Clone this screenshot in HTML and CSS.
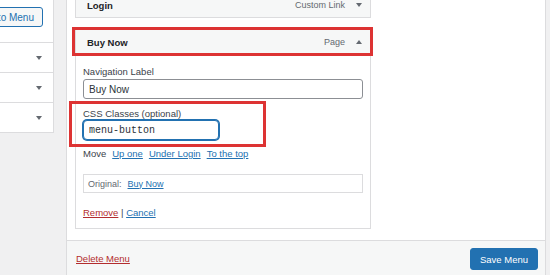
FILE: index.html
```html
<!DOCTYPE html>
<html lang="en">
<head>
<meta charset="utf-8">
<title>Menus</title>
<link rel="stylesheet" href="styles.css">
</head>
<body>
<div class="screen">
  <aside class="side">
    <div class="side-top"><button class="btn-add" type="button">Add to Menu</button></div>
    <div class="side-row"><span class="caret caret-down"></span></div>
    <div class="side-row"><span class="caret caret-down"></span></div>
    <div class="side-row"><span class="caret caret-down"></span></div>
  </aside>
  <main class="panel">
    <div class="panel-body">
      <ul class="items">
        <li class="item">
          <div class="item-head">
            <span class="item-title">Login</span>
            <span class="item-type">Custom Link</span>
            <span class="caret caret-down"></span>
          </div>
        </li>
        <li class="item item-open">
          <div class="item-head">
            <span class="item-title">Buy Now</span>
            <span class="item-type">Page</span>
            <span class="caret caret-up"></span>
            <span class="mark mark-head"></span>
          </div>
          <div class="item-settings">
            <label class="field">
              <span class="field-label">Navigation Label</span>
              <input class="input input-wide" type="text" value="Buy Now">
            </label>
            <label class="field field-css">
              <span class="field-label">CSS Classes (optional)</span>
              <input class="input input-css" type="text" value="menu-button">
              <span class="mark mark-css"></span>
            </label>
            <div class="move-row">
              <span class="move-label">Move</span>
              <a class="link" href="#">Up one</a>
              <a class="link" href="#">Under Login</a>
              <a class="link" href="#">To the top</a>
            </div>
            <div class="original">
              <span class="original-label">Original:</span>
              <a class="link" href="#">Buy Now</a>
            </div>
            <div class="actions">
              <a class="link link-delete" href="#">Remove</a> <span class="sep">|</span> <a class="link" href="#">Cancel</a>
            </div>
          </div>
        </li>
      </ul>
    </div>
    <footer class="panel-foot">
      <a class="link link-delete" href="#">Delete Menu</a>
      <button class="btn-save" type="button">Save Menu</button>
    </footer>
  </main>
</div>
</body>
</html>
```

FILE: styles.css
```css
* { box-sizing: border-box; }

html, body {
  margin: 0;
  padding: 0;
  background: #f0f0f1;
  font-family: "Liberation Sans", Arial, sans-serif;
  font-size: 9.5px;
  color: #3c434a;
}

.screen {
  display: flex;
  align-items: flex-start;
  gap: 12px;
  width: 550px;
  height: 275px;
  overflow: hidden;
}

/* left column */
.side {
  flex: 0 0 54px;
  width: 54px;
  background: #fff;
  border-right: 1px solid #dcdcde;
  border-bottom: 1px solid #dcdcde;
  overflow: hidden;
}

.side-top {
  height: 42px;
  padding: 7px 10px 0 0;
  display: flex;
  justify-content: flex-end;
}

.btn-add {
  flex: 0 0 auto;
  height: 20px;
  padding: 0 8px;
  border: 1px solid #2271b1;
  border-radius: 3px;
  background: #f6f7f7;
  color: #2271b1;
  font-family: "Liberation Sans", Arial, sans-serif;
  font-size: 10px;
  white-space: nowrap;
}

.side-row {
  height: 30px;
  border-top: 1px solid #dcdcde;
  display: flex;
  align-items: center;
  justify-content: flex-end;
  padding-right: 11px;
}

.caret {
  display: inline-block;
  width: 0;
  height: 0;
  border-left: 3.5px solid transparent;
  border-right: 3.5px solid transparent;
}
.caret-down { border-top: 4px solid #646970; }
.caret-up { border-bottom: 4px solid #646970; }

/* main panel */
.panel {
  flex: 0 0 480px;
  width: 480px;
  height: 275px;
  background: #fff;
  border-left: 1px solid #dcdcde;
  border-right: 1px solid #dcdcde;
  display: flex;
  flex-direction: column;
}

.panel-body {
  flex: 1 1 auto;
  padding-left: 8px;
}

.items {
  list-style: none;
  margin: -8px 0 0;
  padding: 0;
  width: 296px;
}

.item + .item { margin-top: 11px; }

.item-head {
  position: relative;
  height: 26px;
  border: 1px solid #dcdcde;
  background: #f6f7f7;
  display: flex;
  align-items: center;
  padding: 0 8px 0 11px;
}

.item-title {
  flex: 1 1 auto;
  font-weight: bold;
  color: #1d2327;
  font-size: 9.5px;
}

.item-type {
  font-size: 9px;
  color: #646970;
  margin-right: 11px;
}

.item-settings {
  border: 1px solid #dcdcde;
  border-top: 0;
  padding: 10px 7px 9px 7px;
}

.field {
  display: block;
  position: relative;
}

.field-label {
  display: block;
  line-height: 13px;
  color: #3c434a;
}

.field-css { margin-top: 8px; }

.input {
  display: block;
  height: 20px;
  margin-top: 1px;
  padding: 0 5px;
  border: 1px solid #8c8f94;
  border-radius: 3px;
  background: #fff;
  color: #2c3338;
  font-family: "Liberation Sans", Arial, sans-serif;
  font-size: 10px;
  outline: none;
}

.input-wide { width: 100%; }

.input-css {
  width: 136px;
  margin-top: 0;
  border-color: #2271b1;
  box-shadow: 0 0 0 1px #2271b1;
  border-radius: 4px;
  font-family: "Liberation Mono", "Courier New", monospace;
}

.move-row {
  margin-top: 7px;
  display: flex;
  gap: 6px;
  line-height: 13px;
}

.move-label { color: #3c434a; }

.link {
  color: #2271b1;
  text-decoration: underline;
}

.link-delete { color: #b32d2e; }

.original {
  margin-top: 14px;
  height: 19px;
  border: 1px solid #dcdcde;
  display: flex;
  align-items: center;
  gap: 6px;
  padding-left: 4px;
  font-size: 9px;
}

.original-label { color: #646970; }

.actions {
  margin-top: 13px;
  line-height: 13px;
}

.sep { color: #3c434a; }

/* footer */
.panel-foot {
  flex: 0 0 35px;
  border-top: 1px solid #dcdcde;
  background: #f6f7f7;
  padding: 7px 7px 0 9px;
  display: flex;
  align-items: flex-start;
  justify-content: space-between;
}

.panel-foot .link-delete {
  line-height: 22px;
}

.btn-save {
  height: 22px;
  padding: 0 9px;
  border: 1px solid #2271b1;
  border-radius: 3px;
  background: #2271b1;
  color: #fff;
  font-family: "Liberation Sans", Arial, sans-serif;
  font-size: 9.5px;
}

/* red annotation boxes */
.mark {
  position: absolute;
  border: 3px solid #dd3333;
  pointer-events: none;
}

.mark-head {
  left: -4px;
  right: -3px;
  top: -3px;
  bottom: -2px;
}

.mark-css {
  left: -14px;
  top: -6px;
  width: 197px;
  height: 46px;
}
```
